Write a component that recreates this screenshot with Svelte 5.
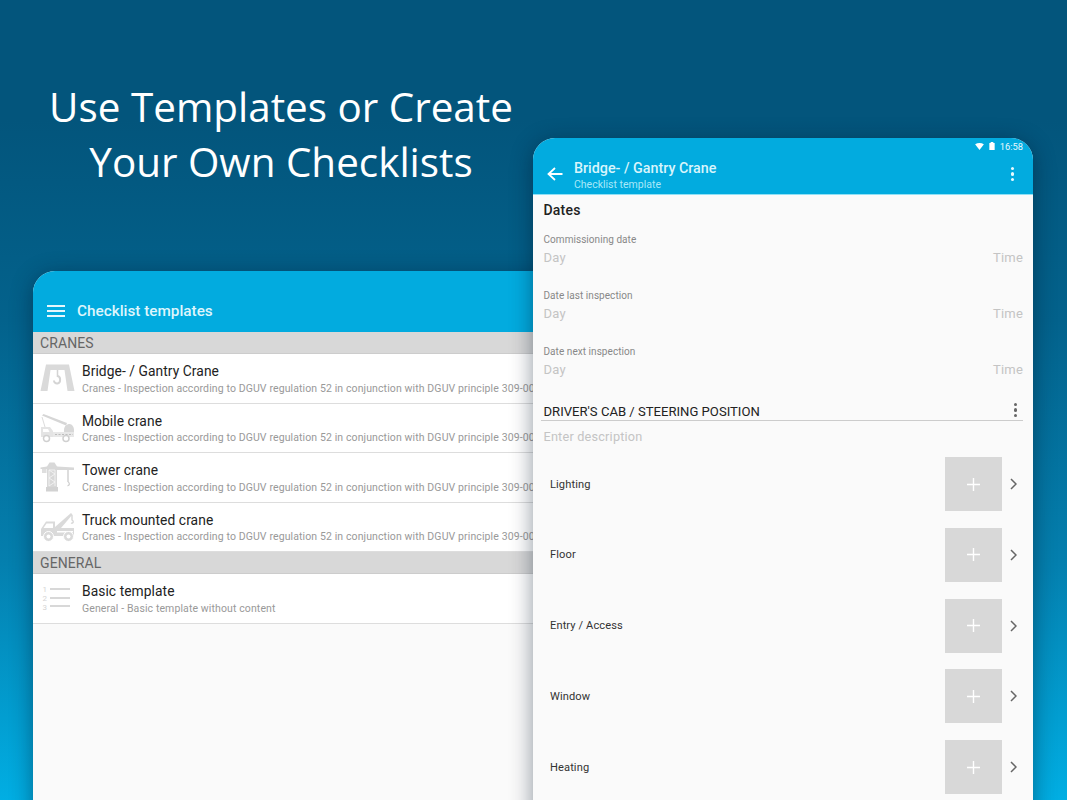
<script>
  const cranes = [
    { t: 'Bridge- / Gantry Crane', k: 'bridge' },
    { t: 'Mobile crane', k: 'mobile' },
    { t: 'Tower crane', k: 'tower' },
    { t: 'Truck mounted crane', k: 'truck' }
  ];
  const sub = 'Cranes - Inspection according to DGUV regulation 52 in conjunction with DGUV principle 309-001';
  const dates = ['Commissioning date', 'Date last inspection', 'Date next inspection'];
  const items = ['Lighting', 'Floor', 'Entry / Access', 'Window', 'Heating'];
</script>

{#snippet icon(k)}
  <svg class="ico" viewBox="0 0 35 30" width="35" height="30" aria-hidden="true">
    {#if k === 'bridge'}
      <path d="M6 1.500h23l5.500 26.500h-7L24.500 7h-14L7.500 28H.5z" fill="#dadada"/>
      <path d="M17.500 7v7" stroke="#d4d4d4" stroke-width="1.500"/>
      <path d="M17.500 13c3.500 .5 3.500 7 0 7.500-2 .3-3.500-1-3.500-3" fill="none" stroke="#d4d4d4" stroke-width="2"/>
    {:else if k === 'mobile'}
      <path d="M2 2.500l1.500-1.500L27 10l-1 2.500z" fill="#d6d6d6"/>
      <path d="M2 4l3 10" stroke="#dcdcdc" stroke-width="1"/>
      <path d="M24 17c0-4 3-6 5.500-6S34 14 34 17v2H24z" fill="#d8d8d8"/>
      <path d="M1 14h9l3 4v6H1z" fill="#e4e4e4"/>
      <path d="M3 16h5l1.500 3H3z" fill="#fff"/>
      <path d="M13 19h21v5H13z" fill="#e8e8e8"/>
      <path d="M15 21.500h18" stroke="#bdbdbd" stroke-width="1.200" stroke-dasharray="2 1.500"/>
      <circle cx="6.500" cy="25.500" r="3" fill="#fff" stroke="#d0d0d0" stroke-width="1.500"/>
      <circle cx="26" cy="25.500" r="3" fill="#fff" stroke="#d0d0d0" stroke-width="1.500"/>
    {:else if k === 'tower'}
      <path d="M.5 5.500 7 4.500V7H.5zM17 4.500l17 1V8H17z" fill="#d8d8d8"/>
      <path d="M2 7h4.500v4H2z" fill="#dedede"/>
      <path d="M9.500 .5h5l2.500 4v23H7v-23z" fill="#d8d8d8"/>
      <path d="M9 8h6M9 8l6 4-6 4 6 4-6 4M15 8v16M9 8v16" fill="none" stroke="#f4f4f4" stroke-width=".9"/>
      <path d="M6 25h12v4.500H6z" fill="#d2d2d2"/>
      <path d="M28 8v12" stroke="#cfcfcf" stroke-width="1.400"/>
      <path d="M28 20c2.200 .8 1.500 4-.5 3.500" fill="none" stroke="#cfcfcf" stroke-width="1.300"/>
    {:else if k === 'truck'}
      <path d="M1 24v-7l5-7.500h9V15L31 1l1.500 1.500L21 16h13v8z" fill="#dadada"/>
      <path d="M6.500 11.500H13V16H3.500z" fill="#fff"/>
      <path d="M17 19h16v1.500H17z" fill="#fff"/>
      <circle cx="8.500" cy="24.500" r="5" fill="#dadada" stroke="#fff" stroke-width="1"/>
      <circle cx="8.500" cy="24.500" r="2" fill="#fff"/>
      <circle cx="28.500" cy="24.500" r="5" fill="#dadada" stroke="#fff" stroke-width="1"/>
      <circle cx="28.500" cy="24.500" r="2" fill="#fff"/>
      <path d="M32 3v5c2.200 1 1.200 4-1 3" fill="none" stroke="#d4d4d4" stroke-width="1.300"/>
    {:else}
      <path d="M10 5h20v2H10zM10 14h20v2H10zM10 22h20v2H10z" fill="#d8d8d8"/>
      <g fill="#d4d4d4" font-size="8" font-family="Roboto, sans-serif">
        <text x="2.500" y="9">1</text><text x="2.500" y="18">2</text><text x="2.500" y="26.500">3</text>
      </g>
    {/if}
  </svg>
{/snippet}

{#snippet row(t, s, k)}
  <div class="row">
    {@render icon(k)}
    <div class="rowtext">
      <div class="rt">{t}</div>
      <div class="rs">{s}</div>
    </div>
  </div>
{/snippet}

<div class="stage">
  <h1>Use Templates or Create<br />Your Own Checklists</h1>

  <section class="win left">
    <header class="lbar">
      <svg viewBox="0 0 18 12" width="18" height="12" aria-hidden="true"><path d="M0 0h18v2H0zM0 5h18v2H0zM0 10h18v2H0z" fill="#fff" opacity=".9"/></svg>
      <span>Checklist templates</span>
    </header>
    <div class="sec">CRANES</div>
    {#each cranes as c}
      {@render row(c.t, sub, c.k)}
    {/each}
    <div class="sec">GENERAL</div>
    {@render row('Basic template', 'General - Basic template without content', 'basic')}
  </section>

  <section class="win right">
    <header class="rbar">
      <div class="status">
        <svg viewBox="0 0 10 8" width="9" height="7" aria-hidden="true"><path d="M0 1.500C3 -.5 7 -.5 10 1.500L5 8z" fill="#fff"/></svg>
        <svg viewBox="0 0 6 9" width="6" height="8" aria-hidden="true"><path d="M0 1h1.500V0h3v1H6v8H0z" fill="#fff"/></svg>
        <span>16:58</span>
      </div>
      <div class="rmain">
        <svg class="back" viewBox="0 0 16 14" width="16" height="14" aria-hidden="true"><path d="M15.500 7H2M8 1 1.500 7 8 13" fill="none" stroke="#fff" stroke-width="1.800"/></svg>
        <div class="rtitles">
          <div class="title">Bridge- / Gantry Crane</div>
          <div class="subt">Checklist template</div>
        </div>
        <span class="dots light"><i></i><i></i><i></i></span>
      </div>
    </header>
    <div class="body">
      <div class="dates">Dates</div>
      {#each dates as d}
        <div class="date">
          <div class="dl">{d}</div>
          <div class="dv"><span>Day</span><span>Time</span></div>
        </div>
      {/each}
      <div class="cab">
        <span>DRIVER'S CAB / STEERING POSITION</span>
        <span class="dots"><i></i><i></i><i></i></span>
      </div>
      <div class="desc">Enter description</div>
      {#each items as it}
        <div class="item">
          <span class="iname">{it}</span>
          <div class="add">
            <svg viewBox="0 0 13 13" width="13" height="13" aria-hidden="true"><path d="M6.500 0v13M0 6.500h13" stroke="#fff" stroke-width="1.400"/></svg>
          </div>
          <svg class="chev" viewBox="0 0 7 12" width="7" height="12" aria-hidden="true"><path d="M1 1l5 5-5 5" fill="none" stroke="#666" stroke-width="1.500"/></svg>
        </div>
      {/each}
    </div>
  </section>
</div>

<style>
  :global(body) { margin: 0; }
  .stage {
    position: relative;
    width: 1067px;
    height: 800px;
    overflow: hidden;
    font-family: Roboto, "Liberation Sans", sans-serif;
    background: linear-gradient(180deg, #03557c 0%, #03557c 15%, #03628c 40%, #047fae 70%, #01aee3 100%);
  }
  h1 {
    position: absolute;
    left: 0;
    top: 79px;
    width: 562px;
    margin: 0;
    text-align: center;
    font: 400 40.400px/55px "Open Sans", sans-serif;
    color: #fff;
  }
  .win {
    position: absolute;
    background: #fafafa;
    border-radius: 22px 22px 0 0;
    overflow: hidden;
    box-shadow: 0 4px 22px rgba(0, 20, 40, .45);
  }
  .left { left: 33px; top: 271px; width: 560px; height: 560px; }
  .right { left: 533px; top: 138px; width: 500px; height: 700px; }
  .lbar {
    height: 61px;
    background: #02abdf;
    display: flex;
    align-items: flex-end;
    padding: 0 0 11px 14px;
    box-sizing: border-box;
    gap: 12px;
    color: #def5fc;
    font-weight: 500;
    font-size: 15.300px;
    line-height: 20px;
  }
  .lbar svg { margin-bottom: 4px; }
  .sec {
    height: 22px;
    background: #d8d8d8;
    color: #666;
    font-size: 14px;
    line-height: 23px;
    padding-left: 7px;
    letter-spacing: .1px;
    border-bottom: 1px solid #ccc;
    box-sizing: border-box;
  }
  .row {
    height: 49.500px;
    background: #fff;
    display: flex;
    align-items: center;
    border-bottom: 1px solid #ddd;
    box-sizing: border-box;
    padding-left: 7px;
    gap: 7px;
  }
  .ico { flex: none; }
  .rowtext { white-space: nowrap; margin-top: 2px; }
  .rt { font-size: 13.800px; line-height: 17px; color: #222; letter-spacing: .07px; }
  .rs { font-size: 10.500px; line-height: 14px; color: #999; letter-spacing: .11px; margin-top: 1.500px; }

  .rbar {
    height: 57px;
    background: #02abdf;
    border-bottom: 1px solid #8fe0f5;
    box-sizing: border-box;
    display: flex;
    flex-direction: column;
  }
  .status {
    height: 16px;
    display: flex;
    justify-content: flex-end;
    align-items: center;
    gap: 5px;
    padding: 0 10px 0 0;
    font-size: 9.300px;
    color: #e8f9fe;
  }
  .rmain { flex: 1; display: flex; align-items: center; padding: 0 19px 0 14px; }
  .back { margin-right: 11px; }
  .rtitles { flex: 1; margin-top: 3px; }
  .title { font-size: 14.300px; font-weight: 500; line-height: 17px; color: #d8f5fc; }
  .subt { font-size: 10.500px; line-height: 13px; color: #a8e8f8; margin-top: 1px; }
  .dots { display: inline-flex; flex-direction: column; gap: 2px; }
  .dots i { display: block; width: 3.500px; height: 3.500px; border-radius: 50%; background: #666; }
  .dots.light i { background: #e8f9fe; }

  .body { padding: 0 10px 0 10.500px; }
  .dates { font-size: 14px; font-weight: 500; line-height: 18px; color: #222; margin-top: 6px; margin-bottom: 14px; letter-spacing: .2px; }
  .date { height: 56px; }
  .dl { font-size: 10px; line-height: 14px; color: #888; letter-spacing: .05px; }
  .dv { display: flex; justify-content: space-between; font-size: 13px; line-height: 22px; color: #c4c4c4; letter-spacing: .2px; }
  .cab {
    display: flex;
    justify-content: space-between;
    align-items: flex-end;
    font-size: 13.100px;
    line-height: 16px;
    color: #222;
    border-bottom: 1px solid #ccc;
    margin: -2px 0 0 -2.500px;
    padding-left: 2.500px;
    height: 22px;
    box-sizing: border-box;
  }
  .cab .dots { margin: 0 6px 3px 0; }
  .desc { font-size: 12.700px; line-height: 18px; color: #c4c4c4; margin-top: 7px; letter-spacing: .2px; margin-bottom: 11px; }
  .item { display: flex; align-items: center; height: 54px; margin-bottom: 16.750px; padding-left: 6.500px; }
  .iname { flex: 1; font-size: 11.100px; color: #333; letter-spacing: .1px; }
  .add { width: 57px; height: 54px; background: #d8d8d8; display: flex; align-items: center; justify-content: center; }
  .chev { margin: 0 6px 0 8px; }
</style>
